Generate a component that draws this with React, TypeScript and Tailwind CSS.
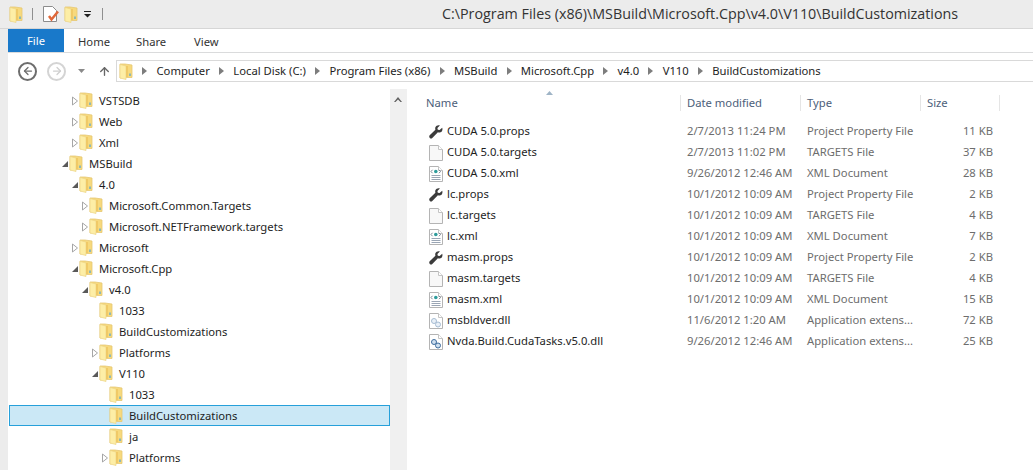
import { ArrowLeft, ArrowRight, ArrowUp } from "lucide-react";

type TreeRow = { label: string; depth: number; state?: "open" | "closed"; selected?: boolean };

const TREE: TreeRow[] = [
  { label: "VSTSDB", depth: 1, state: "closed" },
  { label: "Web", depth: 1, state: "closed" },
  { label: "Xml", depth: 1, state: "closed" },
  { label: "MSBuild", depth: 0, state: "open" },
  { label: "4.0", depth: 1, state: "open" },
  { label: "Microsoft.Common.Targets", depth: 2, state: "closed" },
  { label: "Microsoft.NETFramework.targets", depth: 2, state: "closed" },
  { label: "Microsoft", depth: 1, state: "closed" },
  { label: "Microsoft.Cpp", depth: 1, state: "open" },
  { label: "v4.0", depth: 2, state: "open" },
  { label: "1033", depth: 3 },
  { label: "BuildCustomizations", depth: 3 },
  { label: "Platforms", depth: 3, state: "closed" },
  { label: "V110", depth: 3, state: "open" },
  { label: "1033", depth: 4 },
  { label: "BuildCustomizations", depth: 4, selected: true },
  { label: "ja", depth: 4 },
  { label: "Platforms", depth: 4, state: "closed" },
];

type Kind = "props" | "targets" | "xml" | "dll" | "dllDim";

const FILES: { name: string; date: string; type: string; size: string; kind: Kind }[] = [
  { name: "CUDA 5.0.props", date: "2/7/2013 11:24 PM", type: "Project Property File", size: "11 KB", kind: "props" },
  { name: "CUDA 5.0.targets", date: "2/7/2013 11:02 PM", type: "TARGETS File", size: "37 KB", kind: "targets" },
  { name: "CUDA 5.0.xml", date: "9/26/2012 12:46 AM", type: "XML Document", size: "28 KB", kind: "xml" },
  { name: "lc.props", date: "10/1/2012 10:09 AM", type: "Project Property File", size: "2 KB", kind: "props" },
  { name: "lc.targets", date: "10/1/2012 10:09 AM", type: "TARGETS File", size: "4 KB", kind: "targets" },
  { name: "lc.xml", date: "10/1/2012 10:09 AM", type: "XML Document", size: "7 KB", kind: "xml" },
  { name: "masm.props", date: "10/1/2012 10:09 AM", type: "Project Property File", size: "2 KB", kind: "props" },
  { name: "masm.targets", date: "10/1/2012 10:09 AM", type: "TARGETS File", size: "4 KB", kind: "targets" },
  { name: "masm.xml", date: "10/1/2012 10:09 AM", type: "XML Document", size: "15 KB", kind: "xml" },
  { name: "msbldver.dll", date: "11/6/2012 1:20 AM", type: "Application extens...", size: "72 KB", kind: "dllDim" },
  { name: "Nvda.Build.CudaTasks.v5.0.dll", date: "9/26/2012 12:46 AM", type: "Application extens...", size: "25 KB", kind: "dll" },
];

const CRUMBS = ["Computer", "Local Disk (C:)", "Program Files (x86)", "MSBuild", "Microsoft.Cpp", "v4.0", "V110", "BuildCustomizations"];

function Folder({ className = "" }: { className?: string }) {
  return (
    <svg viewBox="0 0 14 17" className={`h-[17px] w-[14px] shrink-0 ${className}`}>
      <path d="M1 1h5l7 1v12.500H6L1 15z" fill="#f7d97c" stroke="#e6c873" strokeWidth="0.8" />
      <path d="M1 1.500l6 1.500v13.500L1 15z" fill="#fdeea6" stroke="#ecd486" strokeWidth="0.7" />
      <path d="M8 3v11" stroke="#eec45f" strokeWidth="1.500" />
      <path d="M11 10.500v2.500" stroke="#4aa3d8" strokeWidth="1.200" />
    </svg>
  );
}

function Twisty({ state }: { state?: "open" | "closed" }) {
  if (state === "open") {
    return (
      <svg viewBox="0 0 8 8" className="h-2 w-2 shrink-0">
        <path d="M1 7h6V1z" fill="#595959" />
      </svg>
    );
  }
  if (state === "closed") {
    return (
      <svg viewBox="0 0 8 10" className="h-[10px] w-2 shrink-0">
        <path d="M1.500 1l5 4-5 4z" fill="#fff" stroke="#a6a6a6" />
      </svg>
    );
  }
  return <span className="w-2 shrink-0" />;
}

function FileIcon({ kind }: { kind: Kind }) {
  if (kind === "props") {
    return (
      <svg viewBox="0 0 14 14" className="h-[14px] w-[14px] shrink-0">
        <path
          d="M13.200 2.800l-2.600 2.300-1.800-.4-.4-1.800L10.900.4C9.200-.2 7 .5 6.400 2.200c-.3.900-.2 1.800 0 2.500L.7 10.300c-.7.800-.6 1.900.1 2.600.7.700 1.800.7 2.500 0l5.600-5.600c.8.200 1.700.3 2.500 0 1.700-.6 2.500-2.700 1.800-4.500z"
          fill="#3b3b3b"
        />
      </svg>
    );
  }
  return (
    <svg viewBox="0 0 14 16" className="h-4 w-[14px] shrink-0">
      <path d="M.5.500h9l4 4v11H.500z" fill={kind === "targets" ? "#f8f8f8" : "#fff"} stroke="#b4b4b4" />
      <path d="M9.500.500v4h4" fill="#fff" stroke="#c4c4c4" />
      {kind === "xml" && (
        <>
          <circle cx="6.800" cy="5.500" r="1.800" fill="#2d9c9c" />
          <path d="M3.500 3.800L2 5.500l1.500 1.700M10 3.800l1.500 1.700L10 7.200" fill="none" stroke="#5a6a7a" strokeWidth="0.8" />
          <path d="M2.500 9.500h9M2.500 11.500h9M2.500 13.500h9" stroke="#9aa5b4" />
        </>
      )}
      {(kind === "dll" || kind === "dllDim") && (
        <g opacity={kind === "dll" ? 1 : 0.45}>
          <circle cx="5" cy="8" r="2.500" fill="#cfe0f0" stroke="#3d6c9e" />
          <circle cx="9" cy="11.500" r="2.500" fill="#cfe0f0" stroke="#3d6c9e" />
        </g>
      )}
    </svg>
  );
}

function Chevron() {
  return (
    <svg viewBox="0 0 5 8" className="mx-[9.25px] h-2 w-[5px] shrink-0">
      <path d="M0 0l5 4-5 4z" fill="#7d7d7d" />
    </svg>
  );
}

export default function App() {
  return (
    <div className="flex h-[470px] w-[1033px] flex-col overflow-hidden bg-[#ececec] font-['Noto_Sans','Liberation_Sans',sans-serif] text-[11.25px] text-[#1e1e1e]">
      {/* title bar */}
      <div className="flex h-[29px] shrink-0 items-center border-b border-[#d6d6d6] pl-[9px]">
        <Folder />
        <span className="ml-[9px] h-[12px] w-px bg-[#8f8f8f]" />
        <svg viewBox="0 0 16 16" className="ml-[10px] h-4 w-4">
          <path d="M.5.500h9l4 4v11H.500z" fill="#fff" stroke="#8c8c8c" />
          <path d="M6 10l2.500 3.500L15 5.500" fill="none" stroke="#e0683a" strokeWidth="2.500" />
        </svg>
        <Folder className="ml-[5px]" />
        <svg viewBox="0 0 7 7" className="ml-[6px] h-[7px] w-[7px]">
          <path d="M0 .5h7" stroke="#222" />
          <path d="M0 3h7L3.500 6.500z" fill="#222" />
        </svg>
        <span className="ml-[11px] h-[12px] w-px bg-[#8f8f8f]" />
        <span className="ml-[339px] whitespace-nowrap font-['Open_Sans',sans-serif] text-[14.3px] text-[#333]">
          C:\Program Files (x86)\MSBuild\Microsoft.Cpp\v4.0\V110\BuildCustomizations
        </span>
      </div>

      <div className="ml-2 flex min-h-0 flex-1 flex-col bg-white">
        {/* ribbon tabs */}
        <div className="flex h-6 shrink-0 items-center border-b border-[#dadbdc]">
          <div className="flex h-[23px] w-14 items-center justify-center bg-[#1979ca] pt-px text-white">File</div>
          <div className="ml-[14px] w-[58px] pt-[3px] text-[#333]">Home</div>
          <div className="w-[58px] pt-[3px] text-[#333]">Share</div>
          <div className="pt-[3px] text-[#333]">View</div>
        </div>

        {/* address row */}
        <div className="flex h-[36px] shrink-0 items-center">
          <span className="ml-[10px] flex h-[19px] w-[19px] items-center justify-center rounded-full border-2 border-[#6d6d6d]">
            <ArrowLeft size={12} strokeWidth={2.5} className="text-[#6d6d6d]" />
          </span>
          <span className="ml-[10px] flex h-[19px] w-[19px] items-center justify-center rounded-full border-2 border-[#d4d4d4]">
            <ArrowRight size={12} strokeWidth={2.5} className="text-[#cfcfcf]" />
          </span>
          <svg viewBox="0 0 7 4" className="ml-[12px] h-1 w-[7px]">
            <path d="M0 0h7L3.500 4z" fill="#8a8a8a" />
          </svg>
          <ArrowUp size={13} strokeWidth={2.5} className="ml-[13px] text-[#666]" />
          <div className="ml-[5px] flex h-[22px] min-w-0 flex-1 items-center border-y border-l border-[#d9d9d9] pl-[2px]">
            <Folder />
            {CRUMBS.map((crumb) => (
              <span key={crumb} className="flex items-center whitespace-nowrap">
                <Chevron />
                <span className="text-[#1e1e1e]">{crumb}</span>
              </span>
            ))}
          </div>
        </div>

        <div className="flex min-h-0 flex-1">
          {/* nav tree */}
          <div className="ml-px flex w-[381px] shrink-0 flex-col pt-[1px]">
            {TREE.map((row, i) => (
              <div
                key={i}
                className={`flex h-[21px] shrink-0 items-center border ${
                  row.selected ? "border-[#26a0da] bg-[#cbe8f6]" : "border-transparent"
                }`}
                style={{ paddingLeft: 51 + row.depth * 10 }}
              >
                <Twisty state={row.state} />
                <Folder />
                <span className="ml-[6px] whitespace-nowrap pt-px">{row.label}</span>
              </div>
            ))}
          </div>

          {/* tree scrollbar */}
          <div className="flex w-[16px] shrink-0 justify-center bg-[#f0f0f0] pt-[8px]">
            <svg viewBox="0 0 8 5" className="h-[5px] w-2">
              <path d="M0 5l4-5 4 5-1.500 0L4 2.500 1.500 5z" fill="#606060" />
            </svg>
          </div>

          {/* file list */}
          <div className="min-w-0 flex-1 border-l border-[#f0f0f0] pl-[19px]">
            <div className="relative flex h-[28px] items-center text-[#4c607a]">
              <svg viewBox="0 0 7 4" className="absolute left-[120px] top-[2px] h-1 w-[7px]">
                <path d="M0 4l3.500-4L7 4z" fill="#9fb4c6" />
              </svg>
              <span className="w-[254px] shrink-0">Name</span>
              <span className="w-[120px] shrink-0 border-l border-[#e5e5e5] pl-[6px]">Date modified</span>
              <span className="w-[120px] shrink-0 border-l border-[#e5e5e5] pl-[6px]">Type</span>
              <span className="w-[80px] shrink-0 border-x border-[#e5e5e5] pl-[6px]">Size</span>
            </div>
            <div className="mt-[4px]">
              {FILES.map((file) => (
                <div key={file.name} className="flex h-[21px] items-center">
                  <span className="flex w-[21px] shrink-0 justify-center pr-[2px]">
                    <FileIcon kind={file.kind} />
                  </span>
                  <span className="w-[233px] shrink-0 whitespace-nowrap">{file.name}</span>
                  <span className="w-[120px] shrink-0 whitespace-nowrap pl-[7px] text-[#6d6d6d]">{file.date}</span>
                  <span className="w-[120px] shrink-0 whitespace-nowrap pl-[7px] text-[#6d6d6d]">{file.type}</span>
                  <span className="w-[73px] shrink-0 text-right text-[#6d6d6d]">{file.size}</span>
                </div>
              ))}
            </div>
          </div>
        </div>
      </div>
    </div>
  );
}
